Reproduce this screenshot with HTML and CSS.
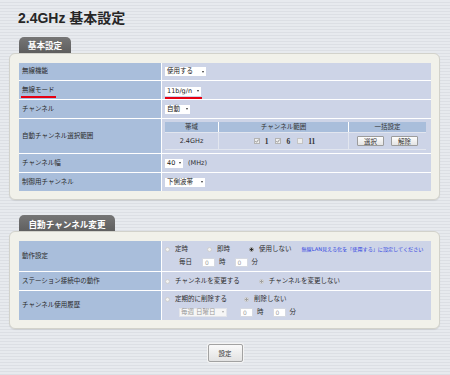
FILE: index.html
```html
<!DOCTYPE html>
<html lang="ja">
<head>
<meta charset="utf-8">
<title>2.4GHz 基本設定</title>
<link rel="stylesheet" href="styles.css">
</head>
<body>
<h1 class="page-title">2.4GHz 基本設定</h1>

<section class="section">
  <div class="tab tab-basic">基本設定</div>
  <div class="panel">
    <div class="form-grid basic-grid">
      <div class="label">無線機能</div>
      <div class="value"><span class="sel sel-use">使用する</span></div>

      <div class="label"><span class="mark mark-label">無線モード</span></div>
      <div class="value"><span class="mark mark-sel"><span class="sel sel-mode">11b/g/n</span></span></div>

      <div class="label">チャンネル</div>
      <div class="value"><span class="sel sel-auto">自動</span></div>

      <div class="label">自動チャンネル選択範囲</div>
      <div class="value">
        <div class="range">
          <div class="rh">帯域</div>
          <div class="rh">チャンネル範囲</div>
          <div class="rh">一括設定</div>
          <div class="rd">2.4GHz</div>
          <div class="rd chans">
            <span class="ch"><svg class="cb" width="6" height="6" viewBox="0 0 6 6"><rect x=".5" y=".5" width="5" height="5" fill="#eeeeee" stroke="#b4b4b4"/><path d="M1.3 3.1 L2.5 4.3 L4.7 1.5" stroke="#8a8a8a" fill="none" stroke-width=".9"/></svg><span class="num">1</span></span>
            <span class="ch"><svg class="cb" width="6" height="6" viewBox="0 0 6 6"><rect x=".5" y=".5" width="5" height="5" fill="#eeeeee" stroke="#b4b4b4"/><path d="M1.3 3.1 L2.5 4.3 L4.7 1.5" stroke="#8a8a8a" fill="none" stroke-width=".9"/></svg><span class="num">6</span></span>
            <span class="ch"><svg class="cb" width="6" height="6" viewBox="0 0 6 6"><rect x=".5" y=".5" width="5" height="5" fill="#eeeeee" stroke="#c4c4c4"/></svg><span class="num">11</span></span>
          </div>
          <div class="rd btns"><button class="mini">選択</button><button class="mini">解除</button></div>
        </div>
      </div>

      <div class="label">チャンネル幅</div>
      <div class="value"><span class="sel sel-width">40</span><span class="unit">(MHz)</span></div>

      <div class="label">制御用チャンネル</div>
      <div class="value"><span class="sel sel-band">下側波帯</span></div>
    </div>
  </div>
</section>

<section class="section section-auto">
  <div class="tab tab-auto">自動チャンネル変更</div>
  <div class="panel">
    <div class="form-grid auto-grid">
      <div class="label">動作設定</div>
      <div class="value stack">
        <div class="line">
          <span class="opt"><span class="radio"></span>定時</span>
          <span class="opt"><span class="radio"></span>即時</span>
          <span class="opt"><span class="radio on"></span>使用しない</span>
          <span class="note">無線LAN見える化を「使用する」に設定してください</span>
        </div>
        <div class="line sub">
          <span class="txt">毎日</span>
          <span class="inp">0</span><span class="txt unit-h">時</span>
          <span class="inp">0</span><span class="txt unit-m">分</span>
        </div>
      </div>

      <div class="label">ステーション接続中の動作</div>
      <div class="value">
        <div class="line">
          <span class="opt opt-wide"><span class="radio"></span>チャンネルを変更する</span>
          <span class="opt"><span class="radio dis-on"></span>チャンネルを変更しない</span>
        </div>
      </div>

      <div class="label">チャンネル使用履歴</div>
      <div class="value stack">
        <div class="line">
          <span class="opt opt-del"><span class="radio"></span>定期的に削除する</span>
          <span class="opt"><span class="radio dis-on"></span>削除しない</span>
        </div>
        <div class="line sub">
          <span class="sel sel-week dis">毎週 日曜日</span>
          <span class="inp inp-gap">0</span><span class="txt unit-h">時</span>
          <span class="inp">0</span><span class="txt unit-m">分</span>
        </div>
      </div>
    </div>
  </div>
</section>

<div class="actions"><button class="btn-submit">設定</button></div>
</body>
</html>
```

FILE: styles.css
```css
html, body {
  margin: 0;
  padding: 0;
}
body {
  width: 450px;
  height: 375px;
  overflow: hidden;
  font-family: "DejaVu Sans", "Noto Sans CJK JP", sans-serif;
  color: #333;
  background-color: #e3e6ea;
  background-image: repeating-linear-gradient(to bottom, #e7eaee 0, #e7eaee 2px, #dcdfe4 2px, #dcdfe4 3px);
}

.page-title {
  margin: 11px 0 0 18px;
  font-family: "Liberation Sans", "Noto Sans CJK JP", sans-serif;
  font-size: 14px;
  line-height: 14px;
  font-weight: bold;
  color: #262626;
}

.section { margin-top: 12px; }
.section-auto { margin-top: 15px; }

.tab {
  margin-left: 19px;
  height: 16px;
  line-height: 17px;
  background: linear-gradient(#767676, #5e5e5e);
  border-radius: 5px 5px 0 0;
  color: #fff;
  font-size: 8.6px;
  font-weight: bold;
  text-align: center;
  font-family: "Noto Sans CJK JP", sans-serif;
}
.tab-basic { width: 52px; }
.tab-auto { width: 96px; height: 17px; line-height: 18px; margin-bottom: -1px; }

.panel {
  margin-left: 9px;
  width: 431px;
  box-sizing: border-box;
  padding: 9px 8px 8px 9px;
  background: #f1f1ea;
  border: 1px solid #d2d2cb;
  border-radius: 6px;
  box-shadow: 0 1px 1px rgba(0,0,0,0.08);
}

.form-grid {
  display: grid;
  grid-template-columns: 142px 1fr;
  gap: 1px;
  background: #ffffff;
}
.basic-grid { grid-template-rows: 17px 18px 18px 34px 18px 18px; }
.auto-grid { grid-template-rows: 30px 18px 29px; }

.label {
  background: #a9bedb;
  font-size: 6.5px;
  line-height: 9px;
  padding-left: 3px;
  display: flex;
  align-items: center;
  color: #2a2a2a;
}
.value {
  background: #cdd4e7;
  font-size: 6.5px;
  line-height: 9px;
  padding-left: 3px;
  display: flex;
  align-items: center;
  color: #2e2e2e;
}

.mark {
  display: inline-block;
  border-bottom: 2px solid #e60012;
}
.mark-label { padding-bottom: 1px; margin-top: 4px; padding-right: 1px; margin-left: -1px; padding-left: 1px; }
.mark-sel { padding-bottom: 1px; padding-right: 1px; margin-top: 5px; line-height: 0; }

.sel {
  display: inline-flex;
  align-items: center;
  height: 9px;
  box-sizing: border-box;
  background: #fff;
  padding-left: 2px;
  font-size: 6.5px;
  line-height: 9px;
  color: #222;
  white-space: nowrap;
}
.sel::after {
  content: "";
  margin-left: auto;
  margin-right: 2px;
  border-left: 1.5px solid transparent;
  border-right: 1.5px solid transparent;
  border-top: 2px solid #333;
}
.sel-use { width: 41px; }
.sel-mode { width: 36px; }
.sel-auto { width: 25px; }
.sel-width { width: 18px; }
.sel-band { width: 40px; }
.sel-week { width: 48px; }
.sel.dis { color: #9a9a9a; background: #f6f6f6; border: 1px solid #e2e4ea; padding-left: 1px; }
.sel.dis::after { border-top-color: #aaa; }

.unit { margin-left: 5px; }

.range {
  width: 261px;
  display: grid;
  grid-template-columns: 53px 129px 1fr;
  grid-template-rows: 10px 16px;
  gap: 1px;
  background: #e2e6ef;
  padding: 0 0 1px 0;
}
.rh {
  background: #a9bedb;
  text-align: center;
  line-height: 10px;
  font-size: 6.5px;
  color: #333;
}
.rh + .rh { box-shadow: -1px 0 0 #ffffff; }
.rd {
  background: #cdd4e7;
  display: flex;
  align-items: center;
  justify-content: center;
  font-size: 6.5px;
}
.chans { gap: 7px; padding-left: 2px; }
.ch { display: inline-flex; align-items: center; gap: 5px; }
.num {
  font-family: "Liberation Serif", serif;
  font-weight: bold;
  font-size: 7.5px;
  color: #333;
}
.btns { gap: 7px; }
.mini {
  width: 27px;
  height: 10px;
  padding: 0;
  margin: 0;
  font-family: "Noto Sans CJK JP", sans-serif;
  font-size: 6.5px;
  line-height: 8px;
  color: #333;
  background: linear-gradient(#fdfdfd, #e4e4e4);
  border: 1px solid #9c9c9c;
  border-radius: 1px;
}

.stack {
  flex-direction: column;
  align-items: flex-start;
  justify-content: center;
  gap: 3px;
}
.line {
  display: flex;
  align-items: center;
  height: 10px;
  white-space: nowrap;
}
.opt {
  display: inline-flex;
  align-items: center;
  gap: 5px;
  margin-right: 19px;
}
.opt-wide { margin-right: 19px; }
.opt-del { margin-right: 17px; }
.line .opt:nth-child(3) { margin-right: 10px; }
.radio {
  width: 5px;
  height: 5px;
  box-sizing: border-box;
  border-radius: 50%;
  border: 1px solid #cfcfcf;
  background: #f2f2f2;
  display: inline-block;
}
.radio.on {
  border-color: #9a9a9a;
  background: radial-gradient(circle, #2a2a2a 0, #2a2a2a 1.2px, #f2f2f2 1.5px);
}
.radio.dis-on {
  border-color: #c6c6c6;
  background: radial-gradient(circle, #a0a0a0 0, #a0a0a0 1px, #f2f2f2 1.4px);
}
.note {
  font-size: 5.1px;
  color: #2b3ce0;
}
.sub { padding-left: 14px; }
.txt { display: inline-block; }
.inp {
  display: inline-block;
  width: 13px;
  height: 9px;
  box-sizing: border-box;
  background: #fff;
  border: 1px solid #d5d9e2;
  color: #a0a0a0;
  font-size: 6px;
  line-height: 7px;
  padding-left: 2px;
  margin-left: 10px;
}
.inp-gap { margin-left: 13px; }
.unit-h { margin-left: 4px; margin-right: -1px; }
.unit-m { margin-left: 4px; }

.actions {
  margin-top: 15px;
  display: flex;
  justify-content: center;
}
.btn-submit {
  width: 35px;
  height: 18px;
  padding: 0;
  font-family: "Noto Sans CJK JP", sans-serif;
  font-size: 6.5px;
  color: #333;
  background: linear-gradient(#fafafa, #e2e2e2);
  border: 1px solid #a2a2a2;
  border-radius: 2px;
  box-shadow: 0 0 0 1px #f4f4f4;
}
```
